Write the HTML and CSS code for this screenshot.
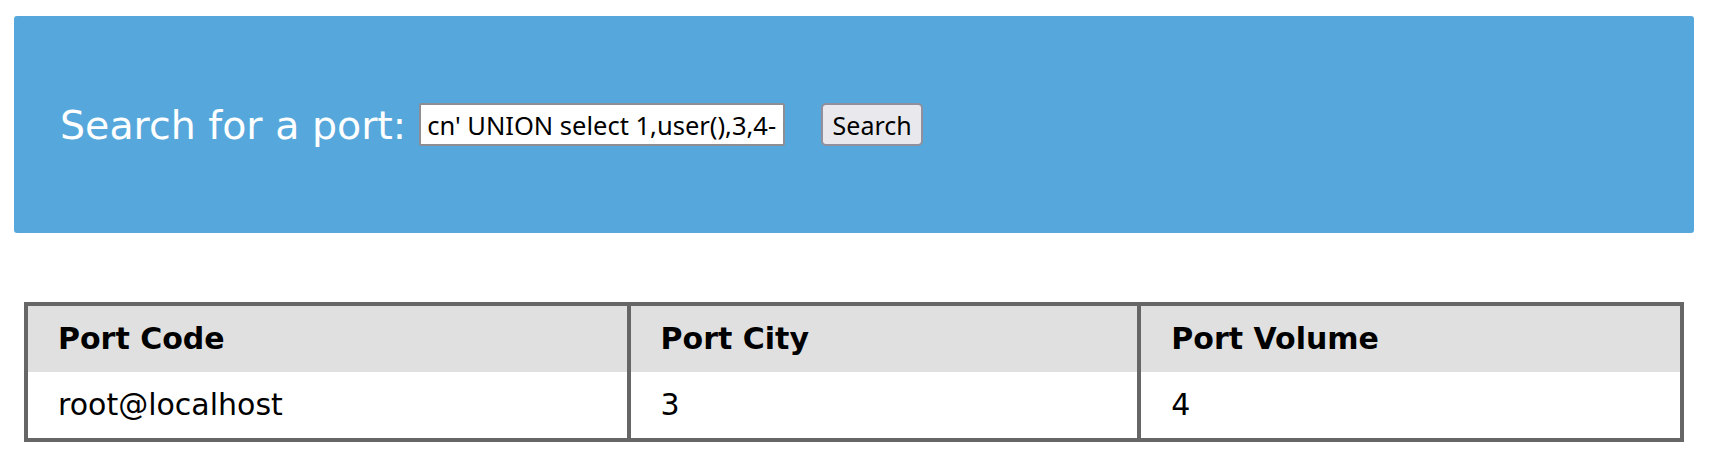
FILE: index.html
```html
<!DOCTYPE html>
<html>
<head>
<meta charset="utf-8">
<link rel="stylesheet" href="styles.css">
</head>
<body>
<form class="search">
  <label class="label" for="q">Search for a port:</label>
  <input class="field" id="q" type="text" value="cn' UNION select 1,user(),3,4-- -">
  <button class="btn" type="button">Search</button>
</form>
<table class="ports">
  <colgroup>
    <col class="c1"><col class="c2"><col class="c3">
  </colgroup>
  <thead>
    <tr><th>Port Code</th><th>Port City</th><th>Port Volume</th></tr>
  </thead>
  <tbody>
    <tr><td>root@localhost</td><td>3</td><td>4</td></tr>
  </tbody>
</table>
</body>
</html>
```
FILE: styles.css
```css
html, body {
  margin: 0;
  background: #ffffff;
}
body {
  padding: 16px 16px 0 14px;
  font-family: "DejaVu Sans", sans-serif;
  color: #000;
}
.search {
  margin: 0;
  height: 217px;
  box-sizing: border-box;
  background: #56a8dc;
  border-radius: 3px;
  display: flex;
  align-items: center;
  padding-left: 46px;
}
.label {
  font-size: 39.5px;
  color: #ffffff;
  margin-right: 13px;
  line-height: 1;
  padding-top: 3px;
}
.field {
  box-sizing: border-box;
  width: 366px;
  height: 43px;
  margin: 0;
  padding: 0 6px;
  font-family: "Noto Sans", sans-serif;
  font-size: 25.5px;
  color: #000;
  background: #fff;
  border: 2px solid #8d8d94;
  border-radius: 2px;
  outline: none;
}
.btn {
  box-sizing: border-box;
  margin-left: 36px;
  height: 43px;
  width: 102px;
  padding: 0;
  font-family: "Noto Sans", sans-serif;
  font-size: 25px;
  color: #000;
  background: #e9e9ed;
  border: 2px solid #8f8f9d;
  border-radius: 5px;
}
.ports {
  margin: 69px 10px 0 10px;
  width: calc(100% - 20px);
  border-collapse: collapse;
  table-layout: fixed;
  border: 4px solid #666666;
  font-size: 30px;
}
.c1 { width: 36.39%; }
.c2 { width: 30.84%; }
.c3 { width: 32.77%; }
.ports th, .ports td {
  text-align: left;
  padding: 15px 30px;
  line-height: 36px;
  border-left: 4px solid #666666;
  border-right: 4px solid #666666;
  white-space: nowrap;
}
.ports th {
  background: #e0e0e0;
  font-weight: bold;
}
.ports td {
  background: #ffffff;
  font-weight: normal;
}
```
